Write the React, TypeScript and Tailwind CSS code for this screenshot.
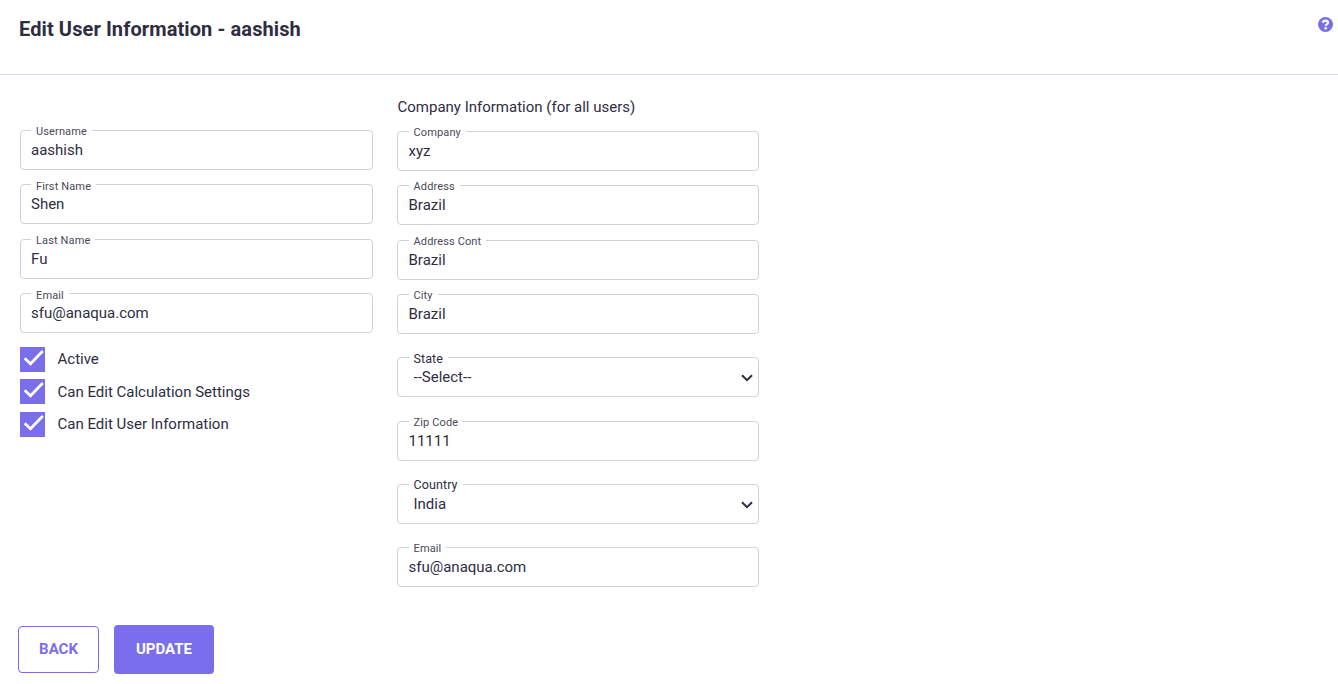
import clsx from "clsx";

interface FieldProps {
  label: string;
  value: string;
  select?: boolean;
  className?: string;
  labelClassName?: string;
}

function Field({ label, value, select, className, labelClassName }: FieldProps) {
  return (
    <label
      className={clsx(
        "relative flex h-10 w-full rounded border border-[#d0d2d9] bg-white",
        className
      )}
    >
      <span
        className={clsx(
          "absolute bg-white px-[5px] whitespace-nowrap",
          select
            ? "-top-[6px] left-[10.5px] text-[12.5px] leading-[14px] tracking-[0.1px] text-[#2f2d42]"
            : "-top-[6px] text-[11px] leading-[13px] tracking-[0.13px] text-[#4a4959]",
          labelClassName || (!select && "left-[10px]")
        )}
      >
        {label}
      </span>
      {select ? (
        <>
          <select
            defaultValue={value}
            className="h-[38px] w-full appearance-none rounded bg-transparent pl-[15.5px] text-[15px] outline-none"
          >
            <option>{value}</option>
          </select>
          <svg
            viewBox="0 0 12 8"
            className="pointer-events-none absolute top-4 right-[5px] h-2 w-3 fill-none stroke-[#2f2d42] stroke-2"
          >
            <path d="M1 1.2l5 5 5-5" />
          </svg>
        </>
      ) : (
        <input
          type="text"
          defaultValue={value}
          className={clsx(
            "h-[38px] w-full rounded bg-transparent text-[15px] outline-none",
            labelClassName === "left-[10.5px]" ? "px-[10.5px]" : "px-[10px]"
          )}
        />
      )}
    </label>
  );
}

interface CheckProps {
  label: string;
  className?: string;
  textClassName?: string;
}

function Check({ label, className, textClassName }: CheckProps) {
  return (
    <div className={clsx("flex h-[25px]", className)}>
      <svg viewBox="0 0 25 25" className="h-[25px] w-[25px] bg-[#7b6eec]">
        <path
          d="M4.7 11.2l5.8 5.6L22.8 4"
          className="fill-none stroke-white stroke-[2.7]"
        />
      </svg>
      <span
        className={clsx(
          "ml-[12.5px] text-[15px] leading-[25px]",
          textClassName
        )}
      >
        {label}
      </span>
    </div>
  );
}

export default function App() {
  return (
    <div className="h-[684px] w-full overflow-hidden bg-white font-[Roboto,sans-serif] text-[#2f2d42]">
      <header className="flex h-[75px] justify-between border-b border-[#d3dce6] pr-[5px] pl-[19px]">
        <h1 className="mt-[15px] text-[20px] leading-7 font-bold tracking-[0.1px]">
          Edit User Information - aashish
        </h1>
        <svg viewBox="0 0 512 512" className="mt-[17px] h-[15px] w-[15px]">
          <circle cx="256" cy="256" r="256" className="fill-[#7b6eec]" />
          <path
            d="M160 196c14-48 50-72 96-72 52 0 88 28 88 68 0 55-80 57-80 104v12"
            className="fill-none stroke-white stroke-[72]"
          />
          <circle cx="262" cy="382" r="44" className="fill-white" />
        </svg>
      </header>

      <main className="flex pl-5">
        <section className="w-[353px] pt-[55px]">
          <Field label="Username" value="aashish" />
          <Field
            label="First Name"
            value="Shen"
            className="mt-[14px]"
            labelClassName="left-[10px] pt-px"
          />
          <Field label="Last Name" value="Fu" className="mt-[15px]" />
          <Field
            label="Email"
            value="sfu@anaqua.com"
            className="mt-[14px]"
            labelClassName="left-[10px] pt-px"
          />
          <Check label="Active" className="mt-[14px]" />
          <Check
            label="Can Edit Calculation Settings"
            className="mt-[7px]"
            textClassName="pt-px"
          />
          <Check label="Can Edit User Information" className="mt-2" />
        </section>

        <section className="ml-6 w-[362px] pt-[21px]">
          <h2 className="h-[35px] pl-[0.5px] text-[15px] leading-[22px]">
            Company Information (for all users)
          </h2>
          <Field label="Company" value="xyz" labelClassName="left-[10.5px]" />
          <Field
            label="Address"
            value="Brazil"
            className="mt-[14px]"
            labelClassName="left-[10.5px]"
          />
          <Field
            label="Address Cont"
            value="Brazil"
            className="mt-[15px]"
            labelClassName="left-[10.5px]"
          />
          <Field
            label="City"
            value="Brazil"
            className="mt-[14px]"
            labelClassName="left-[10.5px]"
          />
          <Field label="State" value="--Select--" select className="mt-[23px]" />
          <Field
            label="Zip Code"
            value="11111"
            className="mt-6"
            labelClassName="left-[10.5px]"
          />
          <Field
            label="Country"
            value="India"
            select
            className="mt-[23px]"
            labelClassName="-mt-px"
          />
          <Field
            label="Email"
            value="sfu@anaqua.com"
            className="mt-[23px]"
            labelClassName="left-[10.5px]"
          />
        </section>
      </main>

      <div className="mt-[38px] flex items-center gap-[15px] pl-[18px]">
        <button className="h-[47px] w-[81px] rounded border border-[#7b6eec] text-[15px] font-bold text-[#7b6eec]">
          BACK
        </button>
        <button className="h-[49px] w-[100px] rounded bg-[#7b6eec] text-[15px] font-bold text-white">
          UPDATE
        </button>
      </div>
    </div>
  );
}
